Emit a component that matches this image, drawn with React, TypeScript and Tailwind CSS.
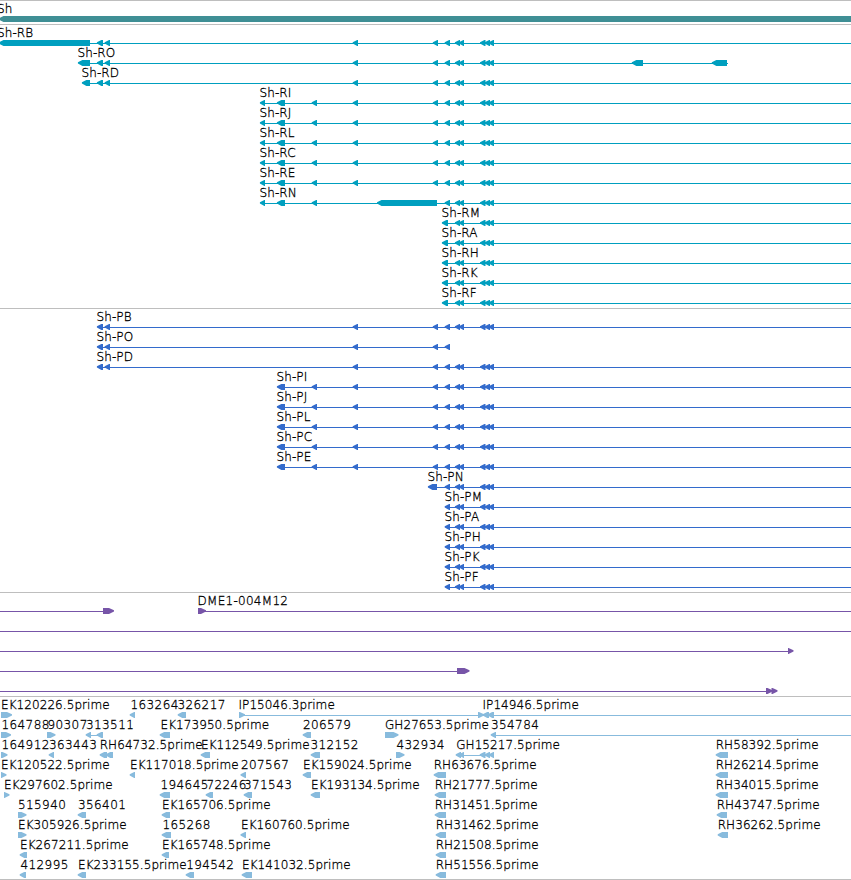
type Feature = [start: number, end: number];
type Label = [x: number, text: string];
type Row = {
  labels?: Label[];
  lines?: Feature[];
  left?: Feature[];
  right?: Feature[];
};

const EDGE = 851;

const exonD: Feature = [352.7, 358];
const exonE: Feature = [432.8, 438];
const exonF: Feature = [444.7, 450];
const exonTail: Feature[] = [
  [454.9, 460], [458.9, 464], [480, 485.5], [484.7, 490], [488.7, 494],
];
const commonExons: Feature[] = [exonD, exonE, exonF, ...exonTail];
const startPair: Feature[] = [[96.9, 103], [104.6, 110]];

const upstream = (name: string): Row => ({
  labels: [[259, name]],
  lines: [[262, EDGE]],
  left: [[259.9, 265], [276.9, 285], [311.7, 317], ...commonExons],
});
const downstream = (name: string): Row => ({
  labels: [[441, name]],
  lines: [[444, EDGE]],
  left: [[441.9, 448], ...exonTail],
});
const upstreamCds = (name: string): Row => ({
  labels: [[276, name]],
  lines: [[279, EDGE]],
  left: [[276.9, 285], [311.7, 317], ...commonExons],
});
const downstreamCds = (name: string): Row => ({
  labels: [[444, name]],
  lines: [[447, EDGE]],
  left: [exonF, ...exonTail],
});

const gene: Row[] = [{ labels: [[-3.5, "Sh"]], left: [[-1, 852]] }];

const transcripts: Row[] = [
  { labels: [[-3.5, "Sh-RB"]], lines: [[90, EDGE]], left: [[-1, 90], ...startPair, ...commonExons] },
  { labels: [[77, "Sh-RO"]], lines: [[80, 728]], left: [[77.9, 90], ...startPair, ...commonExons, [631.8, 643], [711.8, 727]] },
  { labels: [[81, "Sh-RD"]], lines: [[84, EDGE]], left: [[81.9, 90], ...startPair, ...commonExons] },
  ...["Sh-RI", "Sh-RJ", "Sh-RL", "Sh-RC", "Sh-RE"].map(upstream),
  {
    labels: [[259, "Sh-RN"]],
    lines: [[262, EDGE]],
    left: [[259.9, 265], [276.9, 285], [311.7, 317], [377, 437], exonF, ...exonTail],
  },
  ...["Sh-RM", "Sh-RA", "Sh-RH", "Sh-RK", "Sh-RF"].map(downstream),
];

const proteins: Row[] = [
  { labels: [[96, "Sh-PB"]], lines: [[99, EDGE]], left: [...startPair, ...commonExons] },
  { labels: [[96, "Sh-PO"]], lines: [[99, 450]], left: [...startPair, exonD, exonE, exonF] },
  { labels: [[96, "Sh-PD"]], lines: [[99, EDGE]], left: [...startPair, ...commonExons] },
  ...["Sh-PI", "Sh-PJ", "Sh-PL", "Sh-PC", "Sh-PE"].map(upstreamCds),
  { labels: [[427, "Sh-PN"]], lines: [[430, EDGE]], left: [[427.9, 437], exonF, ...exonTail] },
  ...["Sh-PM", "Sh-PA", "Sh-PH", "Sh-PK", "Sh-PF"].map(downstreamCds),
];

const clones: Row[] = [
  { labels: [[197, "DME1-004M12"]], lines: [[0, 108], [200, EDGE]], right: [[103, 114], [198, 206]] },
  { lines: [[0, EDGE]] },
  { lines: [[0, 790]], right: [[788, 793.5]] },
  { lines: [[0, 460]], right: [[457, 469.5]] },
  { lines: [[0, 770]], right: [[766, 772.5], [771.5, 777.5]] },
];

const ests: Row[] = [
  {
    labels: [[0.5, "EK120226.5prime"], [130, "163264"], [177, "326217"], [238, "IP15046.3prime"], [482, "IP14946.5prime"]],
    lines: [[240, EDGE]],
    left: [[129.7, 135], [177.7, 186], [482.7, 489], [487.7, 494]],
    right: [[1, 12], [239, 245], [478, 484]],
  },
  {
    labels: [[1, "164788"], [47, "90307"], [85.5, "313511"], [160, "EK173950.5prime"], [302.5, "206579"], [384.5, "GH27653.5prime"], [490.5, "354784"]],
    lines: [[88, 101], [493, EDGE]],
    left: [[85.7, 91], [96.7, 103], [159.7, 170], [302.7, 311], [490.7, 496]],
    right: [[1, 11], [47, 55.5], [385, 398.5]],
  },
  {
    labels: [[1, "164912"], [48.5, "363443"], [99.2, "RH64732.5prime"], [200.5, "EK112549.5prime"], [310, "312152"], [396, "432934"], [455.7, "GH15217.5prime"]],
    lines: [[102, 110], [458, 492]],
    left: [[48.7, 54], [99.7, 107], [105.7, 113], [200.7, 210], [310.7, 320], [455.7, 461], [459, 464], [479.7, 485.5], [484.7, 490], [488.8, 494]],
    right: [[1, 7.5], [396, 404.5]],
  },
  {
    labels: [[0.5, "EK120522.5prime"], [129.5, "EK117018.5prime"], [240.5, "207567"], [302.5, "EK159024.5prime"], [433.2, "RH63676.5prime"]],
    left: [[129.7, 135], [240.5, 246], [302.7, 311], [433.7, 446]],
    right: [[1, 6.5]],
  },
  {
    labels: [[3.5, "EK297602.5prime"], [160, "194645"], [206, "72246"], [243.5, "371543"], [310.5, "EK193134.5prime"], [434.2, "RH21777.5prime"]],
    left: [[159.7, 170], [205.7, 213], [243.7, 252], [310.7, 320], [434.7, 446]],
    right: [[4, 9.5]],
  },
  {
    labels: [[17.5, "515940"], [77.5, "356401"], [161.5, "EK165706.5prime"], [434.2, "RH31451.5prime"]],
    left: [[77.7, 86], [161.7, 170], [434.7, 446]],
    right: [[18, 26.5]],
  },
  {
    labels: [[17.5, "EK305926.5prime"], [162, "165268"], [240.5, "EK160760.5prime"], [435.2, "RH31462.5prime"]],
    left: [[161.7, 171], [240.5, 246], [435.7, 446]],
    right: [[18, 26.5]],
  },
  {
    labels: [[19.5, "EK267211.5prime"], [161.5, "EK165748.5prime"], [435.2, "RH21508.5prime"]],
    left: [[19.7, 27], [161.7, 169], [435.7, 446]],
  },
  {
    labels: [[20, "412995"], [77.5, "EK233155.5prime"], [185.7, "194542"], [241.5, "EK141032.5prime"], [435.2, "RH51556.5prime"]],
    left: [[19.7, 26], [77.7, 86], [185.7, 194], [241.7, 252], [435.7, 446]],
  },
];

const rightColumn: [number, string, number, number][] = [
  [715.2, "RH58392.5prime", 715.7, 728],
  [715.2, "RH26214.5prime", 715.7, 728],
  [715.2, "RH34015.5prime", 715.7, 728],
  [716.2, "RH43747.5prime", 716.7, 727],
  [717.2, "RH36262.5prime", 717.7, 728],
];
rightColumn.forEach(([x, text, start, end], i) => {
  const row = ests[i + 2];
  row.labels?.push([x, text]);
  row.left?.push([start, end]);
});

const leftArrow = ([a, b]: Feature) => {
  const neck = a + Math.min(4.5, b - a);
  return `${a},18.2 ${neck},16 ${b},16 ${b},22 ${neck},22 ${a},19.6`;
};
const rightArrow = ([a, b]: Feature) => {
  const neck = b - Math.min(5, b - a);
  return `${a},16 ${neck},16 ${b},18.2 ${b},19.6 ${neck},22 ${a},22`;
};

const spacingFor = (text: string) => {
  if (/^\d+$/.test(text)) return "tracking-[0.4px]";
  if (text.startsWith("DME")) return "tracking-[0.28px]";
  return text.startsWith("Sh") ? "tracking-[0.1px]" : "tracking-[0.07px]";
};

function TrackRow({ row }: { row: Row }) {
  return (
    <svg width={EDGE} height={20} className="block h-5 shrink-0 overflow-visible">
      <g fill="currentColor">
        {row.lines?.map(([a, b], i) => (
          <rect key={i} x={a} y={19} width={b - a} height={1} shapeRendering="crispEdges" />
        ))}
        {row.left?.map((f, i) => <polygon key={i} points={leftArrow(f)} />)}
        {row.right?.map((f, i) => <polygon key={i} points={rightArrow(f)} />)}
      </g>
      {row.labels?.map(([x, text]) => (
        <text
          key={text}
          x={x + 0.5}
          y={13}
          className={`fill-black stroke-black stroke-[0.3px] text-[12px] font-extralight ${spacingFor(text)}`}
        >
          {text}
        </text>
      ))}
    </svg>
  );
}

function Track({ rows, className }: { rows: Row[]; className: string }) {
  return (
    <section className={`relative flex flex-col ${className}`}>
      <div className="-mb-px h-px shrink-0 bg-[#bebebe]" />
      {rows.map((row, i) => <TrackRow key={i} row={row} />)}
    </section>
  );
}

export default function App() {
  return (
    <main className="flex h-[880px] w-[851px] flex-col overflow-hidden bg-white font-['DejaVu_Sans',sans-serif]">
      <Track rows={gene} className="h-6 text-[#3f8f95]" />
      <Track rows={transcripts} className="h-[284px] text-[#009fbf]" />
      <Track rows={proteins} className="h-[284px] text-[#336bcc]" />
      <Track rows={clones} className="h-[104px] text-[#7755a8]" />
      <Track rows={ests} className="h-[183px] text-[#88bbdd]" />
      <div className="h-px bg-[#bebebe]" />
    </main>
  );
}
